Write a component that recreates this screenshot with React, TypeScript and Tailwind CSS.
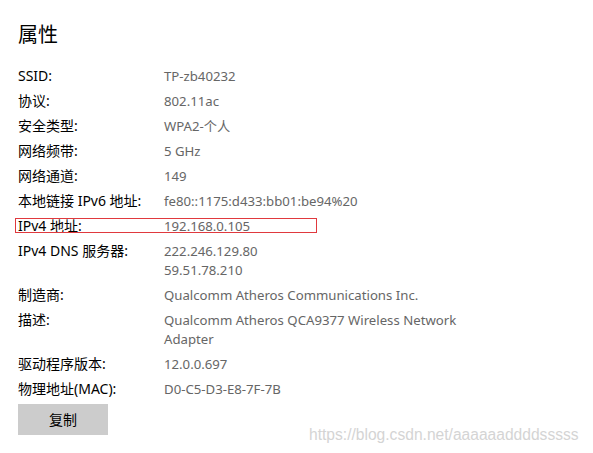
const rows: { label: string; value: string[]; marked?: boolean }[] = [
  { label: "SSID:", value: ["TP-zb40232"] },
  { label: "协议:", value: ["802.11ac"] },
  { label: "安全类型:", value: ["WPA2-个人"] },
  { label: "网络频带:", value: ["5 GHz"] },
  { label: "网络通道:", value: ["149"] },
  { label: "本地链接 IPv6 地址:", value: ["fe80::1175:d433:bb01:be94%20"] },
  { label: "IPv4 地址:", value: ["192.168.0.105"], marked: true },
  { label: "IPv4 DNS 服务器:", value: ["222.246.129.80", "59.51.78.210"] },
  { label: "制造商:", value: ["Qualcomm Atheros Communications Inc."] },
  { label: "描述:", value: ["Qualcomm Atheros QCA9377 Wireless Network", "Adapter"] },
  { label: "驱动程序版本:", value: ["12.0.0.697"] },
  { label: "物理地址(MAC):", value: ["D0-C5-D3-E8-7F-7B"] },
]

export default function App() {
  return (
    <div className="relative h-[453px] w-[593px] overflow-hidden bg-white font-['Noto_Sans','Noto_Sans_CJK_SC',sans-serif] text-black">
      <div className="flex flex-col px-[18px] pt-[22px]">
        <h1 className="text-[20px] leading-[26px] font-normal">属性</h1>

        <div className="mt-[18px] flex flex-col gap-[6px] text-[14px] leading-[19px]">
          {rows.map((r) => (
            <div key={r.label} className="relative flex">
              <div className="w-[146px] shrink-0">{r.label}</div>
              <div className="relative top-[1px] flex flex-col text-[13.2px] text-[#666666]">
                {r.value.map((v) => (
                  <span key={v}>{v}</span>
                ))}
              </div>
              {r.marked && (
                <div className="absolute left-[-3px] top-[2px] h-[15px] w-[302px] border border-[#e0393e]" />
              )}
            </div>
          ))}

          <button className="flex h-[31px] w-[90px] items-center justify-center bg-[#cccccc] text-[14px] text-black">
            复制
          </button>
        </div>
      </div>

      <div className="absolute left-[309px] top-[426px] font-['Liberation_Sans',sans-serif] text-[15.6px] leading-[18px] text-[#d4d4d4]">
        https://blog.csdn.net/aaaaaaddddsssss
      </div>
    </div>
  )
}
